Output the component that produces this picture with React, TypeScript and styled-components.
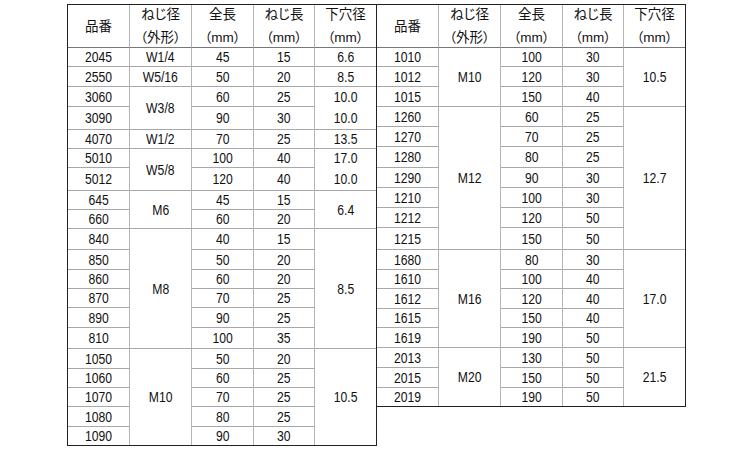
import React from 'react';
import styled, { createGlobalStyle } from 'styled-components';

type Cell = string | { text: string; span?: number; open?: boolean };

interface TableSpec {
  columns: number[];
  rows: number[];
  body: Cell[][];
}

const GlobalStyle = createGlobalStyle`
  html, body {
    margin: 0;
    padding: 0;
    background: #fff;
  }
  body {
    font-family: "Liberation Sans", "Noto Sans CJK JP", Arial, sans-serif;
    color: #111;
  }
`;

const Page = styled.div`
  display: flex;
  align-items: flex-start;
  padding: 4px 0 0 67px;
  width: 750px;
  height: 450px;
  box-sizing: border-box;
  overflow: hidden;
`;

const Frame = styled.div<{ $joined?: boolean }>`
  border: 1px solid #222;
  border-left: ${(p) => (p.$joined ? 'none' : '1px solid #222')};
  overflow: hidden;
`;

const Grid = styled.div<{ $cols: string; $rows: string }>`
  display: grid;
  grid-template-columns: ${(p) => p.$cols};
  grid-template-rows: ${(p) => p.$rows};
  margin: 0 -1px -1px 0;
`;

const HeadCell = styled.div`
  display: flex;
  flex-direction: column;
  align-items: center;
  justify-content: center;
  border-right: 1px solid #b4b4b4;
  border-bottom: 1px solid #777;
  font-size: 13.5px;
  line-height: 23px;
  font-feature-settings: 'palt';
  white-space: nowrap;
`;

const BodyCell = styled.div<{ $span: number; $open?: boolean }>`
  grid-row: span ${(p) => p.$span};
  display: flex;
  align-items: center;
  justify-content: center;
  border-right: 1px solid #b4b4b4;
  border-bottom: 1px solid ${(p) => (p.$open ? 'transparent' : '#a8a8a8')};
  font-size: 14px;
  line-height: 16px;
  white-space: nowrap;
`;

/* the source face is a narrow gothic; squeeze Arial metrics to match */
const Value = styled.span`
  display: inline-block;
  transform: scaleX(0.87);
`;

const left: TableSpec = {
  columns: [62, 62, 62, 61, 62],
  rows: [43, 19, 20, 20, 23, 19, 19, 23, 19, 19, 21, 20, 19, 19, 20, 21, 20, 19, 19, 20, 19],
  body: [
    ['2045', 'W1/4', '45', '15', '6.6'],
    ['2550', 'W5/16', '50', '20', '8.5'],
    ['3060', { text: 'W3/8', span: 2 }, '60', '25', { text: '10.0', open: true }],
    ['3090', '90', '30', '10.0'],
    ['4070', 'W1/2', '70', '25', '13.5'],
    ['5010', { text: 'W5/8', span: 2 }, '100', '40', { text: '17.0', open: true }],
    ['5012', '120', '40', '10.0'],
    ['645', { text: 'M6', span: 2 }, '45', '15', { text: '6.4', span: 2 }],
    ['660', '60', '20'],
    ['840', { text: 'M8', span: 6 }, '40', '15', { text: '8.5', span: 6 }],
    ['850', '50', '20'],
    ['860', '60', '20'],
    ['870', '70', '25'],
    ['890', '90', '25'],
    ['810', '100', '35'],
    ['1050', { text: 'M10', span: 5 }, '50', '20', { text: '10.5', span: 5 }],
    ['1060', '60', '25'],
    ['1070', '70', '25'],
    ['1080', '80', '25'],
    ['1090', '90', '30'],
  ],
};

const right: TableSpec = {
  columns: [62, 62, 62, 61, 62],
  rows: [43, 19, 20, 20, 20, 20, 21, 20, 20, 20, 22, 20, 19, 20, 19, 20, 20, 20, 19],
  body: [
    ['1010', { text: 'M10', span: 3 }, '100', '30', { text: '10.5', span: 3 }],
    ['1012', '120', '30'],
    ['1015', '150', '40'],
    ['1260', { text: 'M12', span: 7 }, '60', '25', { text: '12.7', span: 7 }],
    ['1270', '70', '25'],
    ['1280', '80', '25'],
    ['1290', '90', '30'],
    ['1210', '100', '30'],
    ['1212', '120', '50'],
    ['1215', '150', '50'],
    ['1680', { text: 'M16', span: 5 }, '80', '30', { text: '17.0', span: 5 }],
    ['1610', '100', '40'],
    ['1612', '120', '40'],
    ['1615', '150', '40'],
    ['1619', '190', '50'],
    ['2013', { text: 'M20', span: 3 }, '130', '50', { text: '21.5', span: 3 }],
    ['2015', '150', '50'],
    ['2019', '190', '50'],
  ],
};

const headings: string[][] = [
  ['品番'],
  ['ねじ径', '（外形）'],
  ['全長', '（mm）'],
  ['ねじ長', '（mm）'],
  ['下穴径', '（mm）'],
];

const SpecTable = ({ spec, joined }: { spec: TableSpec; joined?: boolean }) => (
  <Frame $joined={joined}>
    <Grid
      $cols={spec.columns.map((c) => `${c}px`).join(' ')}
      $rows={spec.rows.map((r) => `${r}px`).join(' ')}
    >
      {headings.map((lines, i) => (
        <HeadCell key={`h${i}`}>
          {lines.map((l) => (
            <span key={l}>{l}</span>
          ))}
        </HeadCell>
      ))}
      {spec.body.map((row, r) =>
        row.map((cell, c) => {
          const item = typeof cell === 'string' ? { text: cell } : cell;
          return (
            <BodyCell key={`${r}-${c}`} $span={item.span ?? 1} $open={item.open}>
              <Value>{item.text}</Value>
            </BodyCell>
          );
        }),
      )}
    </Grid>
  </Frame>
);

const App = () => (
  <>
    <GlobalStyle />
    <Page>
      <SpecTable spec={left} />
      <SpecTable spec={right} joined />
    </Page>
  </>
);

export default App;
